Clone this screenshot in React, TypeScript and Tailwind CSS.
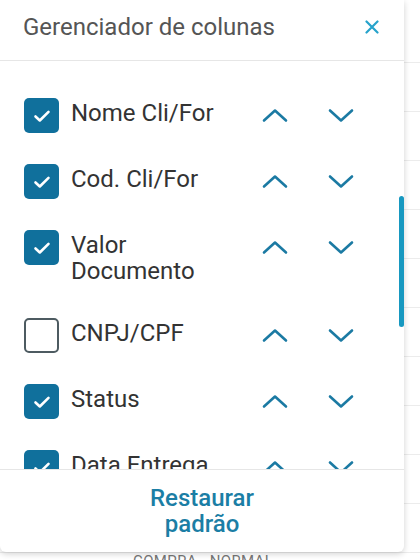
import React, { useState } from "react";

interface Coluna {
  label: string;
  visible: boolean;
}

const initialColumns: Coluna[] = [
  { label: "Nome Cli/For", visible: true },
  { label: "Cod. Cli/For", visible: true },
  { label: "Valor Documento", visible: true },
  { label: "CNPJ/CPF", visible: false },
  { label: "Status", visible: true },
  { label: "Data Entrega", visible: true },
];

const ChevronUp = () => (
  <svg width="26" height="15" viewBox="0 0 26 15" fill="none">
    <path d="M2 12.5 13 2.5 24 12.5" stroke="currentColor" strokeWidth="2.6" strokeLinecap="round" strokeLinejoin="round" />
  </svg>
);

const ChevronDown = () => (
  <svg width="26" height="15" viewBox="0 0 26 15" fill="none">
    <path d="M2 2.5 13 12.5 24 2.5" stroke="currentColor" strokeWidth="2.6" strokeLinecap="round" strokeLinejoin="round" />
  </svg>
);

export default function App() {
  const [columns, setColumns] = useState<Coluna[]>(initialColumns);

  const toggle = (index: number) => {
    const next = [...columns];
    next[index] = { ...next[index], visible: !next[index].visible };
    setColumns(next);
  };

  const move = (index: number, dir: number) => {
    const target = index + dir;
    if (target < 0 || target >= columns.length) return;
    const next = [...columns];
    [next[index], next[target]] = [next[target], next[index]];
    setColumns(next);
  };

  return (
    <div className="relative w-[420px] h-[560px] overflow-hidden bg-white font-['Roboto',sans-serif]">
      {/* tabela ao fundo */}
      <div className="flex flex-col pt-[14px]">
        {Array(11).fill(null).map((_, i) => (
          <div key={i} className="h-[49px] border-b border-[#ececec]" />
        ))}
      </div>
      <div className="absolute left-[133px] top-[552px] text-[15px] leading-[18px] tracking-wide text-[#777]">COMPRA - NORMAL</div>

      {/* painel */}
      <div className="absolute top-0 left-0 w-[404px] h-[552px] flex flex-col bg-white rounded-b-[6px] shadow-[0_2px_6px_rgba(0,0,0,0.18)]">
        <div className="h-[61px] shrink-0 flex items-center justify-between pl-[23px] pr-[25px] pb-[6px] border-b border-[#e6e6e6]">
          <span className="text-[24px] leading-[28px] text-[#555]">Gerenciador de colunas</span>
          <button className="text-[#27a3cb]">
            <svg width="14" height="14" viewBox="0 0 14 14">
              <path d="M1.5 1.5 12.5 12.5M12.5 1.5 1.5 12.5" stroke="currentColor" strokeWidth="2.2" strokeLinecap="round" />
            </svg>
          </button>
        </div>

        <div className="relative flex-1 overflow-hidden">
          <div className="flex flex-col gap-[31px] pt-[37px] pl-[24px]">
            {columns.map((col, index) => (
              <div key={col.label} className="flex items-start min-h-[35px]">
                <button
                  onClick={() => toggle(index)}
                  className={`w-[35px] h-[35px] shrink-0 rounded-[5px] flex items-center justify-center ${
                    col.visible ? "bg-[#10709c]" : "border-2 border-[#4d5b61] bg-white"
                  }`}
                >
                  {col.visible && (
                    <svg width="18" height="14" viewBox="0 0 18 14" fill="none">
                      <path d="M2.5 7.5 6.8 11.5 15.5 2.8" stroke="white" strokeWidth="2.6" strokeLinecap="round" strokeLinejoin="round" />
                    </svg>
                  )}
                </button>
                <span className="w-[170px] shrink-0 pl-[12px] pt-[3px] pb-[3px] text-[24px] leading-[25.5px] text-[#333]">{col.label}</span>
                <div className="flex ml-[24px] text-[#1b7aa3]">
                  <button onClick={() => move(index, -1)} className="w-[44px] h-[35px] flex items-center justify-center">
                    <ChevronUp />
                  </button>
                  <button onClick={() => move(index, 1)} className="ml-[22px] w-[44px] h-[35px] flex items-center justify-center">
                    <ChevronDown />
                  </button>
                </div>
              </div>
            ))}
          </div>
          <div className="absolute right-0 top-[135px] w-[5px] h-[131px] rounded-full bg-[#1798c0]" />
        </div>

        <div className="h-[83px] shrink-0 border-t border-[#e6e6e6] flex items-center justify-center">
          <button className="w-[130px] text-[24px] leading-[26px] font-medium text-[#1b7ea5]">Restaurar padrão</button>
        </div>
      </div>
    </div>
  );
}
